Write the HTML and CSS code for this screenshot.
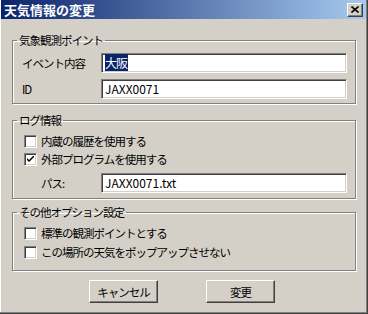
FILE: index.html
```html
<!DOCTYPE html>
<html lang="ja">
<head>
    <meta charset="UTF-8">
    <title>天気情報の変更</title>
    <link rel="stylesheet" href="styles.css">
</head>
<body>
    <div class="window">
        <div class="title-bar">
            <span class="title">天気情報の変更</span>
            <button class="close-btn" type="button">
                <svg width="8" height="7" viewBox="0 0 8 7">
                    <path d="M0.5 0.5 L7.5 6.5 M7.5 0.5 L0.5 6.5" stroke="#000" stroke-width="1.6" fill="none"/>
                </svg>
            </button>
        </div>

        <div class="content">
            <fieldset class="group">
                <legend>気象観測ポイント</legend>
                <div class="group-body point">
                    <div class="row">
                        <label>イベント内容</label>
                        <div class="field"><span class="selected">大阪</span></div>
                    </div>
                    <div class="row">
                        <label>ID</label>
                        <div class="field">JAXX0071</div>
                    </div>
                </div>
            </fieldset>

            <fieldset class="group">
                <legend>ログ情報</legend>
                <div class="group-body log">
                    <div class="check-row">
                        <span class="checkbox"></span>
                        <span>内蔵の履歴を使用する</span>
                    </div>
                    <div class="check-row">
                        <span class="checkbox">
                            <svg width="7" height="7" viewBox="0 0 7 7">
                                <path d="M0 2 L0 4 L2 6 L7 1 L7 -1 L2 4 Z" fill="#000"/>
                            </svg>
                        </span>
                        <span>外部プログラムを使用する</span>
                    </div>
                    <div class="row path-row">
                        <label>パス:</label>
                        <div class="field">JAXX0071.txt</div>
                    </div>
                </div>
            </fieldset>

            <fieldset class="group">
                <legend>その他オプション設定</legend>
                <div class="group-body other">
                    <div class="check-row">
                        <span class="checkbox"></span>
                        <span>標準の観測ポイントとする</span>
                    </div>
                    <div class="check-row">
                        <span class="checkbox"></span>
                        <span>この場所の天気をポップアップさせない</span>
                    </div>
                </div>
            </fieldset>

            <div class="buttons">
                <button type="button" class="btn">キャンセル</button>
                <button type="button" class="btn">変更</button>
            </div>
        </div>
    </div>
</body>
</html>
```

FILE: styles.css
```css
body {
    margin: 0;
    font-family: "Noto Sans CJK JP", sans-serif;
    font-size: 11.5px;
    letter-spacing: -1px;
    color: #000;
}
.window {
    width: 368px;
    height: 314px;
    box-sizing: border-box;
    background-color: #d4d0c8;
    border-right: 1px solid #404040;
    border-bottom: 1px solid #404040;
    box-shadow: inset -1px -1px 0 #808080, inset 1px 0 0 #ffffff;
}
.title-bar {
    height: 19px;
    margin: 0 1px 0 1px;
    display: flex;
    align-items: center;
    justify-content: space-between;
    padding: 0 3px 0 3px;
    background: linear-gradient(to right, #0a246a, #a6caf0);
}
.title {
    color: #ffffff;
    font-weight: bold;
    font-size: 13px;
    letter-spacing: 0;
    line-height: 19px;
}
.close-btn {
    width: 16px;
    height: 14px;
    padding: 0;
    display: flex;
    align-items: center;
    justify-content: center;
    background-color: #d4d0c8;
    border: 1px solid;
    border-color: #ffffff #404040 #404040 #ffffff;
    box-shadow: inset -1px -1px 0 #808080;
}
.content {
    padding: 14px 11px 0 12px;
}
.group {
    margin: 0;
    padding: 0;
    border: 1px solid #808080;
    box-shadow: 1px 1px 0 #ffffff, inset 1px 1px 0 #ffffff;
}
.group + .group {
    margin-top: 9px;
}
.group:last-of-type {
    margin-top: 6px;
}
legend {
    margin-left: 4px;
    padding: 0 2px;
    line-height: 14px;
}
.group-body {
    padding: 6px 8px 4px 9px;
}
.row {
    display: grid;
    grid-template-columns: 79px 1fr;
    align-items: center;
    height: 20px;
}
.row + .row {
    margin-top: 6px;
}
.field {
    height: 20px;
    box-sizing: border-box;
    background-color: #ffffff;
    border: 1px solid;
    border-color: #808080 #ffffff #ffffff #808080;
    box-shadow: inset 1px 1px 0 #404040, inset -1px -1px 0 #d4d0c8;
    padding: 0 3px;
    font-size: 12px;
    letter-spacing: 0;
    line-height: 18px;
}
.selected {
    background-color: #0a246a;
    color: #ffffff;
    letter-spacing: -1px;
    padding: 0 1px 0 0;
}
.log {
    padding: 5px 8px 5px 11px;
}
.other {
    padding: 5px 8px 9px 11px;
}
.check-row {
    display: flex;
    align-items: center;
    gap: 4px;
    height: 18px;
}
.checkbox {
    width: 13px;
    height: 13px;
    box-sizing: border-box;
    background-color: #ffffff;
    border: 1px solid;
    border-color: #808080 #ffffff #ffffff #808080;
    box-shadow: inset 1px 1px 0 #404040, inset -1px -1px 0 #d4d0c8;
    display: flex;
    align-items: center;
    justify-content: center;
}
.path-row {
    margin-top: 5px;
    grid-template-columns: 77px 1fr;
}
.path-row label {
    padding-left: 17px;
}
.other .check-row + .check-row {
    margin-top: 1px;
}
.buttons {
    display: flex;
    justify-content: center;
    gap: 48px;
    margin-top: 9px;
    padding-right: 4px;
}
.btn {
    width: 69px;
    height: 23px;
    padding: 0;
    font-family: "Noto Sans CJK JP", sans-serif;
    font-size: 11.5px;
    letter-spacing: -1px;
    color: #000;
    background-color: #d4d0c8;
    border: 1px solid;
    border-color: #ffffff #404040 #404040 #ffffff;
    box-shadow: inset -1px -1px 0 #808080;
}
```
